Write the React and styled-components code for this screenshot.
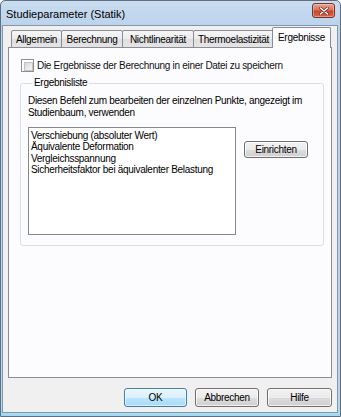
import React from "react";
import styled, { createGlobalStyle, css } from "styled-components";

const GlobalStyle = createGlobalStyle`
  html, body { margin: 0; padding: 0; background: #ffffff; }
  body {
    font-family: "Liberation Sans", Arial, sans-serif;
    font-size: 10px;
    letter-spacing: -0.3px;
    color: #111;
  }
  * { box-sizing: border-box; }
`;

const Window = styled.div`
  width: 341px;
  height: 417px;
  display: flex;
  flex-direction: column;
  background: linear-gradient(#c9dcf0 0px, #bcd3ec 25px, #bcd3ec 390px, #a9dcf0 412px, #9ad6ee 417px);
  border: 1px solid #5f6f82;
  border-radius: 5px 5px 0 0;
  overflow: hidden;
`;

const TitleBar = styled.div`
  height: 24px;
  flex: none;
  display: flex;
  align-items: center;
  justify-content: space-between;
  padding: 0 5px 0 5px;
`;

const Title = styled.div`
  font-size: 11px;
  letter-spacing: 0;
  color: #000;
  padding-top: 2px;
`;

const CloseButton = styled.div`
  width: 23px;
  height: 15px;
  margin-top: -5px;
  border: 1px solid #7a3024;
  border-radius: 3px;
  background: linear-gradient(#e8a393 0%, #d8735c 45%, #c9452a 55%, #d4684b 100%);
  display: flex;
  align-items: center;
  justify-content: center;
  box-shadow: inset 0 0 0 1px rgba(255, 255, 255, 0.35);
`;

const Body = styled.div`
  flex: 1;
  display: flex;
  flex-direction: column;
  margin: 0 2px 3px 1px;
  background: #f0f0f0;
  border: 1px solid #8496ab;
  padding: 2px 5px 5px 5px;
`;

const TabStrip = styled.div`
  display: flex;
  align-items: flex-end;
  height: 20px;
  padding-left: 3px;
  position: relative;
  z-index: 1;
  margin-bottom: -1px;
`;

const Tab = styled.div`
  width: ${(p) => p.$w}px;
  height: ${(p) => (p.$active ? 21 : 18)}px;
  margin-left: -1px;
  display: flex;
  align-items: center;
  justify-content: center;
  white-space: nowrap;
  border: 1px solid #898c95;
  border-bottom: ${(p) => (p.$active ? "none" : "1px solid #898c95")};
  border-radius: 2px 2px 0 0;
  background: ${(p) =>
    p.$active ? "#fcfcfe" : "linear-gradient(#f6f6f6 0%, #ececec 50%, #dfdfdf 51%, #e4e4e4 100%)"};
  color: #000;
  padding-top: ${(p) => (p.$active ? 0 : 1)}px;
  ${(p) =>
    p.$active &&
    css`
      position: relative;
      z-index: 2;
      margin-left: -2px;
      padding-bottom: 2px;
    `}
  &:first-child { margin-left: 0; }
`;

const Panel = styled.div`
  flex: 1;
  background: #fcfcfe;
  border: 1px solid #898c95;
  padding: 11px 7px 0 11px;
  display: flex;
  flex-direction: column;
`;

const CheckRow = styled.label`
  display: flex;
  align-items: center;
  gap: 3px;
  height: 13px;
  margin-left: 1px;
`;

const CheckBox = styled.span`
  width: 13px;
  height: 13px;
  flex: none;
  border: 1px solid #8e8f8f;
  background: #fff;
  padding: 2px;
  &::after {
    content: "";
    display: block;
    width: 100%;
    height: 100%;
    background: linear-gradient(135deg, #d9d9d9, #f6f6f6);
    border: 1px solid #c3c3c3;
  }
`;

const GroupBox = styled.fieldset`
  margin: 5px 0 0 0;
  padding: 3px 7px 10px 7px;
  border: 1px solid #d5dfe5;
  border-radius: 3px;
  min-width: 0;
`;

const Legend = styled.legend`
  padding: 0 2px;
  margin-left: 4px;
  color: #000;
  line-height: 12px;
`;

const Description = styled.div`
  line-height: 11.5px;
  color: #000;
  margin-top: 3px;
`;

const ListArea = styled.div`
  display: flex;
  align-items: flex-start;
  gap: 8px;
  margin-top: 9px;
`;

const ListBox = styled.div`
  width: 208px;
  height: 108px;
  border: 1px solid #828790;
  background: #fff;
  padding: 2px 2px;
  display: flex;
  flex-direction: column;
`;

const ListItem = styled.div`
  line-height: 11.4px;
  white-space: nowrap;
  color: #000;
`;

const Button = styled.button`
  width: ${(p) => p.$w || 64}px;
  height: ${(p) => p.$h || 19}px;
  font-family: inherit;
  font-size: 10px;
  letter-spacing: -0.3px;
  color: #000;
  padding: 0;
  border-radius: 3px;
  border: 1px solid ${(p) => (p.$default ? "#3c7fb1" : "#707070")};
  background: ${(p) =>
    p.$default
      ? "linear-gradient(#eaf6fd 0%, #d9f0fc 50%, #bee6fd 51%, #a7d9f5 100%)"
      : "linear-gradient(#f2f2f2 0%, #ebebeb 50%, #dddddd 51%, #cfcfcf 100%)"};
  box-shadow: inset 0 0 0 1px ${(p) => (p.$default ? "rgba(255,255,255,0.6)" : "rgba(255,255,255,0.7)")};
`;

const SideButton = styled(Button)`
  margin-top: 14px;
`;

const ButtonRow = styled.div`
  display: flex;
  justify-content: flex-end;
  gap: 8px;
  margin-top: 10px;
`;

const tabs = [
  { label: "Allgemein", w: 51 },
  { label: "Berechnung", w: 62 },
  { label: "Nichtlinearität", w: 72 },
  { label: "Thermoelastizität", w: 81 },
  { label: "Ergebnisse", w: 59, active: true },
];

const items = [
  "Verschiebung (absoluter Wert)",
  "Äquivalente Deformation",
  "Vergleichsspannung",
  "Sicherheitsfaktor bei äquivalenter Belastung",
];

export default function App() {
  return (
    <>
      <GlobalStyle />
      <Window>
        <TitleBar>
          <Title>Studieparameter (Statik)</Title>
          <CloseButton>
            <svg width="10" height="8" viewBox="0 0 10 8">
              <path d="M1.5 1 L8.5 7 M8.5 1 L1.5 7" stroke="#5a1a10" strokeWidth="2.6" strokeLinecap="round" />
              <path d="M1.5 1 L8.5 7 M8.5 1 L1.5 7" stroke="#ffffff" strokeWidth="1.6" strokeLinecap="round" />
            </svg>
          </CloseButton>
        </TitleBar>
        <Body>
          <TabStrip>
            {tabs.map((t) => (
              <Tab key={t.label} $w={t.w} $active={t.active}>
                {t.label}
              </Tab>
            ))}
          </TabStrip>
          <Panel>
            <CheckRow>
              <CheckBox />
              <span>Die Ergebnisse der Berechnung in einer Datei zu speichern</span>
            </CheckRow>
            <GroupBox>
              <Legend>Ergebnisliste</Legend>
              <Description>
                Diesen Befehl zum bearbeiten der einzelnen Punkte, angezeigt im
                <br />
                Studienbaum, verwenden
              </Description>
              <ListArea>
                <ListBox>
                  {items.map((it) => (
                    <ListItem key={it}>{it}</ListItem>
                  ))}
                </ListBox>
                <SideButton $w={64} $h={17}>Einrichten</SideButton>
              </ListArea>
            </GroupBox>
          </Panel>
          <ButtonRow>
            <Button $default $w={63}>OK</Button>
            <Button $w={64}>Abbrechen</Button>
            <Button $w={65}>Hilfe</Button>
          </ButtonRow>
        </Body>
      </Window>
    </>
  );
}
